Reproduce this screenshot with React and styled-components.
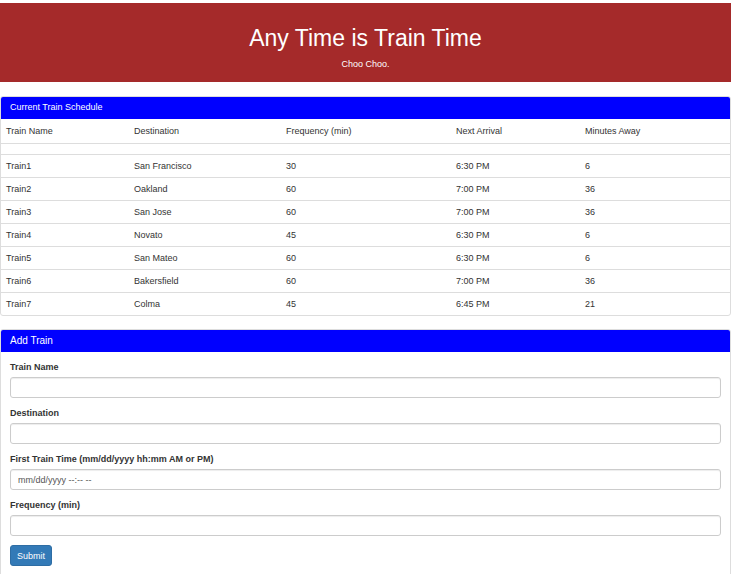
import React from "react";
import styled, { createGlobalStyle } from "styled-components";

const GlobalStyle = createGlobalStyle`
  html, body {
    margin: 0;
    padding: 0;
    background: #fff;
  }
  body {
    font-family: "Liberation Sans", Arial, sans-serif;
    color: #333;
    font-size: 9px;
    line-height: 13px;
  }
  * {
    box-sizing: border-box;
  }
`;

const trains = [
  { name: "Train1", destination: "San Francisco", frequency: 30, next: "6:30 PM", away: 6 },
  { name: "Train2", destination: "Oakland", frequency: 60, next: "7:00 PM", away: 36 },
  { name: "Train3", destination: "San Jose", frequency: 60, next: "7:00 PM", away: 36 },
  { name: "Train4", destination: "Novato", frequency: 45, next: "6:30 PM", away: 6 },
  { name: "Train5", destination: "San Mateo", frequency: 60, next: "6:30 PM", away: 6 },
  { name: "Train6", destination: "Bakersfield", frequency: 60, next: "7:00 PM", away: 36 },
  { name: "Train7", destination: "Colma", frequency: 45, next: "6:45 PM", away: 21 },
];

const columns = [
  { label: "Train Name", width: "128px" },
  { label: "Destination", width: "152px" },
  { label: "Frequency (min)", width: "170px" },
  { label: "Next Arrival", width: "129px" },
  { label: "Minutes Away", width: "auto" },
];

const Page = styled.div`
  padding-top: 3px;
`;

const Jumbotron = styled.header`
  background: #a52a2a;
  color: #fff;
  text-align: center;
  height: 79px;
  padding-top: 22px;
  margin-bottom: 14px;
`;

const Title = styled.h1`
  margin: 0;
  font-size: 23px;
  line-height: 27px;
  font-weight: 400;
`;

const Subtitle = styled.p`
  margin: 6px 0 0;
  font-size: 9px;
  line-height: 13px;
`;

const Panel = styled.section`
  border: 1px solid #ddd;
  border-radius: 3px;
  background: #fff;
  margin-bottom: 13px;
  overflow: hidden;
`;

const PanelHeading = styled.div`
  background: #0000ff;
  color: #fff;
  height: 23px;
  margin: -1px -1px 0;
  padding: 0 10px;
  display: flex;
  align-items: center;
  font-size: ${(p) => (p.$big ? "10px" : "9px")};
`;

const Table = styled.table`
  width: 100%;
  border-collapse: collapse;
  table-layout: fixed;
`;

const Th = styled.th`
  text-align: left;
  font-weight: 400;
  padding: 5px 5px;
  line-height: 14px;
  width: ${(p) => p.$width};
`;

const Td = styled.td`
  padding: 5px 5px;
  line-height: 12px;
  border-top: 1px solid #ddd;
`;

const PanelBody = styled.div`
  padding: 9px 9px 12px;
`;

const FormGroup = styled.div`
  margin-bottom: 9px;
`;

const Label = styled.label`
  display: block;
  font-weight: 700;
  margin-bottom: 3px;
  line-height: 13px;
`;

const Input = styled.input`
  display: block;
  width: 100%;
  height: 21px;
  padding: 0 7px;
  font-family: inherit;
  font-size: 9px;
  color: #555;
  border: 1px solid #ccc;
  border-radius: 3px;
  box-shadow: inset 0 1px 1px rgba(0, 0, 0, 0.075);
  &::placeholder {
    color: #555;
  }
`;

const Button = styled.button`
  height: 21px;
  padding: 0 6px;
  font-family: inherit;
  font-size: 9px;
  color: #fff;
  background: #337ab7;
  border: 1px solid #2e6da4;
  border-radius: 3px;
`;

export default function App() {
  return (
    <Page>
      <GlobalStyle />
      <Jumbotron>
        <Title>Any Time is Train Time</Title>
        <Subtitle>Choo Choo.</Subtitle>
      </Jumbotron>

      <Panel>
        <PanelHeading>Current Train Schedule</PanelHeading>
        <Table>
          <thead>
            <tr>
              {columns.map((c) => (
                <Th key={c.label} $width={c.width}>
                  {c.label}
                </Th>
              ))}
            </tr>
          </thead>
          <tbody>
            <tr>
              <Td colSpan={5} />
            </tr>
            {trains.map((t) => (
              <tr key={t.name}>
                <Td>{t.name}</Td>
                <Td>{t.destination}</Td>
                <Td>{t.frequency}</Td>
                <Td>{t.next}</Td>
                <Td>{t.away}</Td>
              </tr>
            ))}
          </tbody>
        </Table>
      </Panel>

      <Panel>
        <PanelHeading $big>Add Train</PanelHeading>
        <PanelBody>
          <FormGroup>
            <Label>Train Name</Label>
            <Input type="text" />
          </FormGroup>
          <FormGroup>
            <Label>Destination</Label>
            <Input type="text" />
          </FormGroup>
          <FormGroup>
            <Label>First Train Time (mm/dd/yyyy hh:mm AM or PM)</Label>
            <Input type="text" placeholder="mm/dd/yyyy --:-- --" />
          </FormGroup>
          <FormGroup>
            <Label>Frequency (min)</Label>
            <Input type="text" />
          </FormGroup>
          <Button type="button">Submit</Button>
        </PanelBody>
      </Panel>
    </Page>
  );
}
